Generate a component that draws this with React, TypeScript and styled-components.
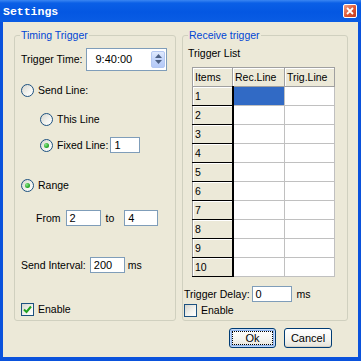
import React from "react";
import styled, { createGlobalStyle } from "styled-components";

const GlobalStyle = createGlobalStyle`
  html, body { margin: 0; padding: 0; }
  body {
    font-family: "Liberation Sans", Arial, sans-serif;
    font-size: 10.5px;
    color: #000;
    background: #ECE9D8;
  }
`;

const Window = styled.div`
  width: 361px;
  height: 361px;
  display: flex;
  flex-direction: column;
  overflow: hidden;
`;

const TitleBar = styled.div`
  height: 22px;
  flex: none;
  display: flex;
  align-items: center;
  justify-content: space-between;
  padding: 0 4px 0 3px;
  box-sizing: border-box;
  background: linear-gradient(to bottom, #3A86F2 0%, #0A5FE6 14%, #0457E2 55%, #0A5CE4 100%);
`;

const Title = styled.span`
  font-family: "Liberation Mono", "Courier New", monospace;
  font-weight: bold;
  font-size: 11.5px;
  color: #fff;
`;

const CloseBtn = styled.div`
  width: 14px;
  height: 14px;
  box-sizing: border-box;
  border: 1px solid #fff;
  border-radius: 2px;
  background: linear-gradient(135deg, #F2A288 0%, #DD5533 55%, #C43C1F 100%);
  display: flex;
  align-items: center;
  justify-content: center;
`;

const Body = styled.div`
  flex: 1;
  display: flex;
  flex-direction: column;
  border: solid #0A52DC;
  border-width: 0 3px 4px 3px;
  padding: 7px 10px 0 11px;
  background: #ECE9D8;
`;

const Groups = styled.div`
  display: flex;
  gap: 6px;
  height: 292px;
`;

const Group = styled.fieldset<{ $w: number }>`
  width: ${(p) => p.$w}px;
  min-width: 0;
  height: 100%;
  box-sizing: border-box;
  margin: 0;
  padding: 0 6px;
  border: 1px solid #D0D0BF;
  border-radius: 3px;
  display: flex;
  flex-direction: column;
`;

const Legend = styled.legend`
  color: #0046D5;
  padding: 0 1px;
  margin-left: -1px;
  line-height: 13px;
`;

const Row = styled.div<{ $top: number; $h?: number; $indent?: number; $gap?: number }>`
  display: flex;
  align-items: center;
  height: ${(p) => p.$h ?? 14}px;
  margin-top: ${(p) => p.$top}px;
  margin-left: ${(p) => p.$indent ?? 0}px;
  gap: ${(p) => p.$gap ?? 0}px;
  white-space: nowrap;
`;

const Text = styled.span<{ $ml?: number; $mr?: number }>`
  margin-left: ${(p) => p.$ml ?? 0}px;
  margin-right: ${(p) => p.$mr ?? 0}px;
  line-height: 13px;
`;

const Choice = styled.label`
  display: inline-flex;
  align-items: center;
  gap: 4px;
`;

const RadioDot = styled.span<{ $on?: boolean }>`
  width: 13px;
  height: 13px;
  flex: none;
  box-sizing: border-box;
  border-radius: 50%;
  border: 1px solid #1C5180;
  background: linear-gradient(135deg, #D6D6CE 0%, #F4F4F0 60%, #FFFFFF 100%);
  display: inline-flex;
  align-items: center;
  justify-content: center;

  &::after {
    content: "";
    width: 5px;
    height: 5px;
    border-radius: 50%;
    background: ${(p) =>
      p.$on ? "radial-gradient(circle at 35% 35%, #8CE68C 0%, #2BAA2B 60%, #1A8A1A 100%)" : "transparent"};
  }
`;

const CheckBox = styled.span`
  width: 13px;
  height: 13px;
  flex: none;
  box-sizing: border-box;
  border: 1px solid #1C5180;
  background: linear-gradient(135deg, #D6D6CE 0%, #F4F4F0 60%, #FFFFFF 100%);
  display: inline-flex;
  align-items: center;
  justify-content: center;
`;

const Edit = styled.div<{ $w: number; $h?: number }>`
  width: ${(p) => p.$w}px;
  height: ${(p) => p.$h ?? 16}px;
  box-sizing: border-box;
  border: 1px solid #7F9DB9;
  background: #fff;
  padding-left: 3px;
  display: flex;
  align-items: center;
  flex: none;
  font-size: 11px;
`;

const TimeText = styled.span`
  flex: 1;
  padding-left: 5px;
`;

const Spin = styled.div`
  width: 14px;
  height: 17px;
  margin-right: 1px;
  box-sizing: border-box;
  border: 1px solid #B4C8F2;
  border-radius: 2px;
  background: linear-gradient(to bottom, #E0EAFD 0%, #C3D5FA 50%, #B5CAF7 100%);
  display: flex;
  flex-direction: column;
  align-items: center;
  justify-content: center;
  gap: 2px;
`;

const Grid = styled.table`
  border-collapse: collapse;
  table-layout: fixed;
  width: 142px;
  margin: 7px 0 0 3px;
  border: 1px solid #A0A0A0;
  background: #fff;

  tr {
    height: 19px;
  }
  th,
  td {
    box-sizing: border-box;
    padding: 0 0 0 2px;
    text-align: left;
    font-weight: normal;
    line-height: 13px;
    overflow: hidden;
    white-space: nowrap;
  }
`;

const HeadCell = styled.th<{ $w: number }>`
  width: ${(p) => p.$w}px;
  background: #ECE9D8;
  border: 1px solid #A0A0A0;
  box-shadow: inset 1px 1px 0 #fff;
`;

const RowHead = styled.td`
  background: #ECE9D8;
  border: 1px solid #9A9A9A;
  border-right: 2px solid #000;
  border-bottom: 1px solid #000;
  box-shadow: inset 1px 1px 0 #fff;
`;

const Cell = styled.td<{ $sel?: boolean }>`
  border: 1px solid #C0C0C0;
  background: ${(p) => (p.$sel ? "#316AC5" : "#fff")};
`;

const Buttons = styled.div`
  display: flex;
  justify-content: flex-end;
  gap: 8px;
  margin-top: 7px;
  padding-right: 16px;
`;

const Button = styled.button<{ $w: number; $focus?: boolean }>`
  width: ${(p) => p.$w}px;
  height: 20px;
  box-sizing: border-box;
  padding: 2px;
  font: 11px "Liberation Sans", Arial, sans-serif;
  color: #000;
  border: 1px solid #003C74;
  border-radius: 3px;
  background: linear-gradient(to bottom, #FFFFFF 0%, #F5F5F1 55%, #E4E2D9 100%);
  box-shadow: ${(p) =>
    p.$focus ? "inset 0 0 0 1px #C2D8F8, inset 0 0 0 2px #8FB5EF" : "inset 0 -1px 0 #D6D0C5"};
  display: flex;
`;

const ButtonFace = styled.span<{ $focus?: boolean }>`
  flex: 1;
  display: flex;
  align-items: center;
  justify-content: center;
  border: 1px dotted ${(p) => (p.$focus ? "#000" : "transparent")};
`;

const Check = () => (
  <svg width="9" height="9" viewBox="0 0 9 9">
    <polyline points="1,4.5 3.5,7 8,1.5" fill="none" stroke="#21A121" strokeWidth="2" />
  </svg>
);

const Arrow = ({ up }: { up?: boolean }) => (
  <svg width="7" height="4" viewBox="0 0 7 4">
    <polygon points={up ? "0,4 3.5,0 7,4" : "0,0 3.5,4 7,0"} fill="#4D6185" />
  </svg>
);

const Radio = ({ on, label }: { on?: boolean; label: string }) => (
  <Choice>
    <RadioDot $on={on} />
    <Text>{label}</Text>
  </Choice>
);

const rows = [1, 2, 3, 4, 5, 6, 7, 8, 9, 10];

export default function App() {
  return (
    <Window>
      <GlobalStyle />
      <TitleBar>
        <Title>Settings</Title>
        <CloseBtn>
          <svg width="8" height="8" viewBox="0 0 8 8">
            <path d="M1 1 L7 7 M7 1 L1 7" stroke="#fff" strokeWidth="1.8" />
          </svg>
        </CloseBtn>
      </TitleBar>
      <Body>
        <Groups>
          <Group $w={162}>
            <Legend>Timing Trigger</Legend>
            <Row $top={6} $h={22} $gap={4}>
              <Text>Trigger Time:</Text>
              <Edit $w={81} $h={23}>
                <TimeText>9:40:00</TimeText>
                <Spin>
                  <Arrow up />
                  <Arrow />
                </Spin>
              </Edit>
            </Row>
            <Row $top={13}>
              <Radio label="Send Line:" />
            </Row>
            <Row $top={15} $indent={19}>
              <Radio label="This Line" />
            </Row>
            <Row $top={11} $h={16} $indent={19} $gap={2}>
              <Radio on label="Fixed Line:" />
              <Edit $w={30}>1</Edit>
            </Row>
            <Row $top={25}>
              <Radio on label="Range" />
            </Row>
            <Row $top={18} $h={16} $indent={15} $gap={5}>
              <Text>From</Text>
              <Edit $w={35}>2</Edit>
              <Text $mr={5}>to</Text>
              <Edit $w={34}>4</Edit>
            </Row>
            <Row $top={31} $h={16} $gap={4}>
              <Text>Send Interval:</Text>
              <Edit $w={35}>200</Edit>
              <Text $ml={-1}>ms</Text>
            </Row>
            <Row $top={29}>
              <Choice>
                <CheckBox>
                  <Check />
                </CheckBox>
                <Text>Enable</Text>
              </Choice>
            </Row>
          </Group>
          <Group $w={166}>
            <Legend>Receive trigger</Legend>
            <Row $top={5} $h={13} $indent={-1}>
              <Text>Trigger List</Text>
            </Row>
            <Grid>
              <thead>
                <tr>
                  <HeadCell $w={40}>Items</HeadCell>
                  <HeadCell $w={52}>Rec.Line</HeadCell>
                  <HeadCell $w={50}>Trig.Line</HeadCell>
                </tr>
              </thead>
              <tbody>
                {rows.map((n) => (
                  <tr key={n}>
                    <RowHead>{n}</RowHead>
                    <Cell $sel={n === 1} />
                    <Cell />
                  </tr>
                ))}
              </tbody>
            </Grid>
            <Row $top={9} $h={16} $indent={-5} $gap={2}>
              <Text>Trigger Delay:</Text>
              <Edit $w={40}>0</Edit>
              <Text $ml={3}>ms</Text>
            </Row>
            <Row $top={1} $indent={-5}>
              <Choice>
                <CheckBox />
                <Text>Enable</Text>
              </Choice>
            </Row>
          </Group>
        </Groups>
        <Buttons>
          <Button $w={47} $focus>
            <ButtonFace $focus>Ok</ButtonFace>
          </Button>
          <Button $w={48}>
            <ButtonFace>Cancel</ButtonFace>
          </Button>
        </Buttons>
      </Body>
    </Window>
  );
}
